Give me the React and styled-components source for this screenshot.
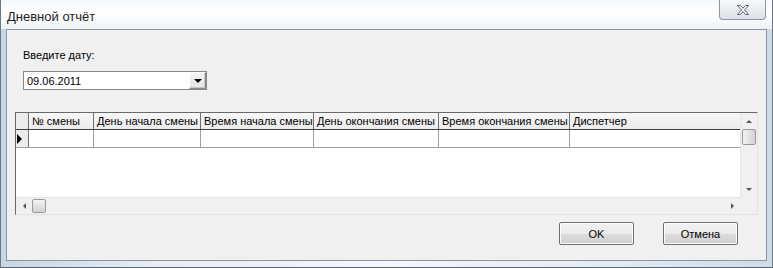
import React from 'react'
import styled, { createGlobalStyle } from 'styled-components'

const GlobalStyle = createGlobalStyle`
  html, body {
    margin: 0;
    padding: 0;
    background: #ffffff;
  }
  body {
    font-family: "Liberation Sans", Arial, sans-serif;
    font-size: 11px;
    color: #000;
  }
`;

// Window frame
const Window = styled.div`
  width: 773px;
  height: 268px;
  box-sizing: border-box;
  display: flex;
  flex-direction: column;
  background: linear-gradient(90deg, #c9d5e2 0%, #e7edf3 20%, #f4f7fa 50%, #e3eaf1 80%, #cfdbe7 100%);
  border-left: 1px solid #6b7886;
  border-right: 1px solid #6b7886;
  border-bottom: 1px solid #5b6672;
`;

const TitleBar = styled.div`
  height: 29px;
  flex-shrink: 0;
  display: flex;
  align-items: flex-start;
  justify-content: space-between;
  padding: 0 6px 0 6px;
  background: linear-gradient(180deg, #f6f8fa 0%, #ffffff 45%, #eef2f6 100%);
`;

const Caption = styled.span`
  font-family: "Liberation Sans", Arial, sans-serif;
  font-size: 13px;
  line-height: 15px;
  margin-top: 9px;
  color: #1e1e1e;
`;

const CloseButton = styled.div`
  width: 47px;
  height: 20px;
  box-sizing: border-box;
  display: flex;
  align-items: center;
  justify-content: center;
  border: 1px solid #8e98a3;
  border-top: none;
  border-radius: 0 0 4px 4px;
  background: linear-gradient(180deg, #f7f9fb 0%, #e9edf1 50%, #dce2e8 100%);
`;

const ClientArea = styled.div`
  flex: 1;
  margin: 0 5px 6px 5px;
  border: 1px solid #8796a6;
  background: #f0f0f0;
  display: flex;
  flex-direction: column;
`;

const DateBlock = styled.div`
  display: flex;
  flex-direction: column;
  gap: 9px;
  padding: 19px 0 0 16px;
`;

const Label = styled.label`
  font-size: 11px;
  line-height: 13px;
  color: #000;
`;

const Combo = styled.div`
  width: 184px;
  height: 19px;
  box-sizing: border-box;
  display: flex;
  align-items: center;
  justify-content: space-between;
  background: #fff;
  border: 1px solid #828790;
  padding-left: 3px;
`;

const ComboText = styled.span`
  font-size: 11px;
`;

const DropButton = styled.div`
  width: 17px;
  height: 17px;
  box-sizing: border-box;
  display: flex;
  align-items: center;
  justify-content: center;
  border: 1px solid #8b8b8b;
  border-top-color: #ffffff;
  border-left-color: #ffffff;
  background: linear-gradient(180deg, #f4f4f4 0%, #e4e4e4 100%);
  box-shadow: inset -1px -1px 0 #c8c8c8;
`;

// Data grid
const Grid = styled.div`
  margin: 22px 0 0 8px;
  width: 743px;
  height: 103px;
  box-sizing: border-box;
  border-top: 1px solid #696969;
  border-left: 1px solid #696969;
  border-right: 1px solid #e3e3e3;
  border-bottom: 1px solid #e3e3e3;
  display: grid;
  grid-template-columns: 1fr 17px;
  grid-template-rows: 1fr 17px;
  background: #fff;
`;

const Body = styled.div`
  display: flex;
  flex-direction: column;
  overflow: hidden;
  background: #fff;
`;

const Row = styled.div`
  display: flex;
  height: ${p => (p.$header ? 17 : 18)}px;
  box-sizing: border-box;
  border-bottom: 1px solid ${p => (p.$header ? '#404040' : '#a0a0a0')};
  background: ${p => (p.$header ? 'linear-gradient(180deg, #f7f7f7 0%, #ececec 100%)' : '#fff')};
`;

const Cell = styled.div`
  width: ${p => p.$w}px;
  flex-shrink: 0;
  box-sizing: border-box;
  border-right: 1px solid ${p => (p.$header ? '#707070' : '#a0a0a0')};
  padding-left: 3px;
  font-size: 11px;
  line-height: 16px;
  white-space: nowrap;
  overflow: hidden;
`;

const Indicator = styled.div`
  width: 13px;
  flex-shrink: 0;
  box-sizing: border-box;
  border-right: 1px solid #707070;
  background: #ececec;
  display: flex;
  align-items: center;
  justify-content: flex-start;
  padding-left: 1px;
`;

const VScroll = styled.div`
  display: flex;
  flex-direction: column;
  align-items: center;
  background: #f0f0f0;
  border-left: 1px solid #e6e6e6;
`;

const HScroll = styled.div`
  display: flex;
  align-items: center;
  background: #f0f0f0;
  border-top: 1px solid #e6e6e6;
`;

const Corner = styled.div`
  background: #f0f0f0;
`;

const Arrow = styled.div`
  width: 16px;
  height: 16px;
  flex-shrink: 0;
  display: flex;
  align-items: center;
  justify-content: center;
`;

const Thumb = styled.div`
  width: 14px;
  height: ${p => (p.$vertical ? 16 : 14)}px;
  box-sizing: border-box;
  border: 1px solid #9a9a9a;
  border-radius: 2px;
  background: linear-gradient(${p => (p.$vertical ? '90deg' : '180deg')}, #f3f3f3 0%, #e2e2e2 50%, #d2d2d2 100%);
`;

const Spacer = styled.div`
  flex: 1;
`;

const Footer = styled.div`
  display: flex;
  justify-content: flex-end;
  gap: 29px;
  padding: 7px 28px 0 0;
`;

const Button = styled.button`
  width: 75px;
  height: 23px;
  box-sizing: border-box;
  font-family: "Liberation Sans", Arial, sans-serif;
  font-size: 11px;
  color: #000;
  border: 1px solid #707070;
  border-radius: 2px;
  background: linear-gradient(180deg, #f2f2f2 0%, #ebebeb 50%, #dddddd 51%, #cfcfcf 100%);
  box-shadow: inset 0 0 0 1px #fbfbfb;
  padding: 0;
`;

const columns = [
  { title: '№ смены', w: 65 },
  { title: 'День начала смены', w: 107 },
  { title: 'Время начала смены', w: 113 },
  { title: 'День окончания смены', w: 125 },
  { title: 'Время окончания смены', w: 131 },
  { title: 'Диспетчер', w: 172 },
];

const Tri = ({ dir, size = 3, color = '#000' }) => {
  const s = size;
  const pts = {
    down: `0,0 ${s * 2},0 ${s},${s}`,
    up: `0,${s} ${s * 2},${s} ${s},0`,
    left: `${s},0 ${s},${s * 2} 0,${s}`,
    right: `0,0 0,${s * 2} ${s},${s}`,
  }[dir];
  const w = dir === 'up' || dir === 'down' ? s * 2 : s;
  const h = dir === 'up' || dir === 'down' ? s : s * 2;
  return (
    <svg width={w} height={h} viewBox={`0 0 ${w} ${h}`}>
      <polygon points={pts} fill={color} />
    </svg>
  );
};

const CloseIcon = () => (
  <svg width="14" height="12" viewBox="0 0 14 12">
    <path
      d="M1.5 1.5 h3 l2.5 2.8 l2.5 -2.8 h3 l-4 4.5 l4 4.5 h-3 l-2.5 -2.8 l-2.5 2.8 h-3 l4 -4.5 z"
      fill="#ffffff"
      stroke="#5a6470"
      strokeWidth="1"
      strokeLinejoin="round"
    />
  </svg>
);

const App = () => {
  return (
    <>
      <GlobalStyle />
      <Window>
        <TitleBar>
          <Caption>Дневной отчёт</Caption>
          <CloseButton>
            <CloseIcon />
          </CloseButton>
        </TitleBar>
        <ClientArea>
          <DateBlock>
            <Label>Введите дату:</Label>
            <Combo>
              <ComboText>09.06.2011</ComboText>
              <DropButton>
                <Tri dir="down" size={4} />
              </DropButton>
            </Combo>
          </DateBlock>

          <Grid>
            <Body>
              <Row $header>
                <Indicator />
                {columns.map(c => (
                  <Cell key={c.title} $w={c.w} $header>{c.title}</Cell>
                ))}
              </Row>
              <Row>
                <Indicator>
                  <Tri dir="right" size={5} />
                </Indicator>
                {columns.map(c => (
                  <Cell key={c.title} $w={c.w} />
                ))}
              </Row>
            </Body>
            <VScroll>
              <Arrow><Tri dir="up" size={3} color="#555" /></Arrow>
              <Thumb $vertical />
              <Spacer />
              <Arrow><Tri dir="down" size={3} color="#555" /></Arrow>
            </VScroll>
            <HScroll>
              <Arrow><Tri dir="left" size={3} color="#555" /></Arrow>
              <Thumb />
              <Spacer />
              <Arrow><Tri dir="right" size={3} color="#555" /></Arrow>
            </HScroll>
            <Corner />
          </Grid>

          <Footer>
            <Button>OK</Button>
            <Button>Отмена</Button>
          </Footer>
        </ClientArea>
      </Window>
    </>
  );
};

export default App;
